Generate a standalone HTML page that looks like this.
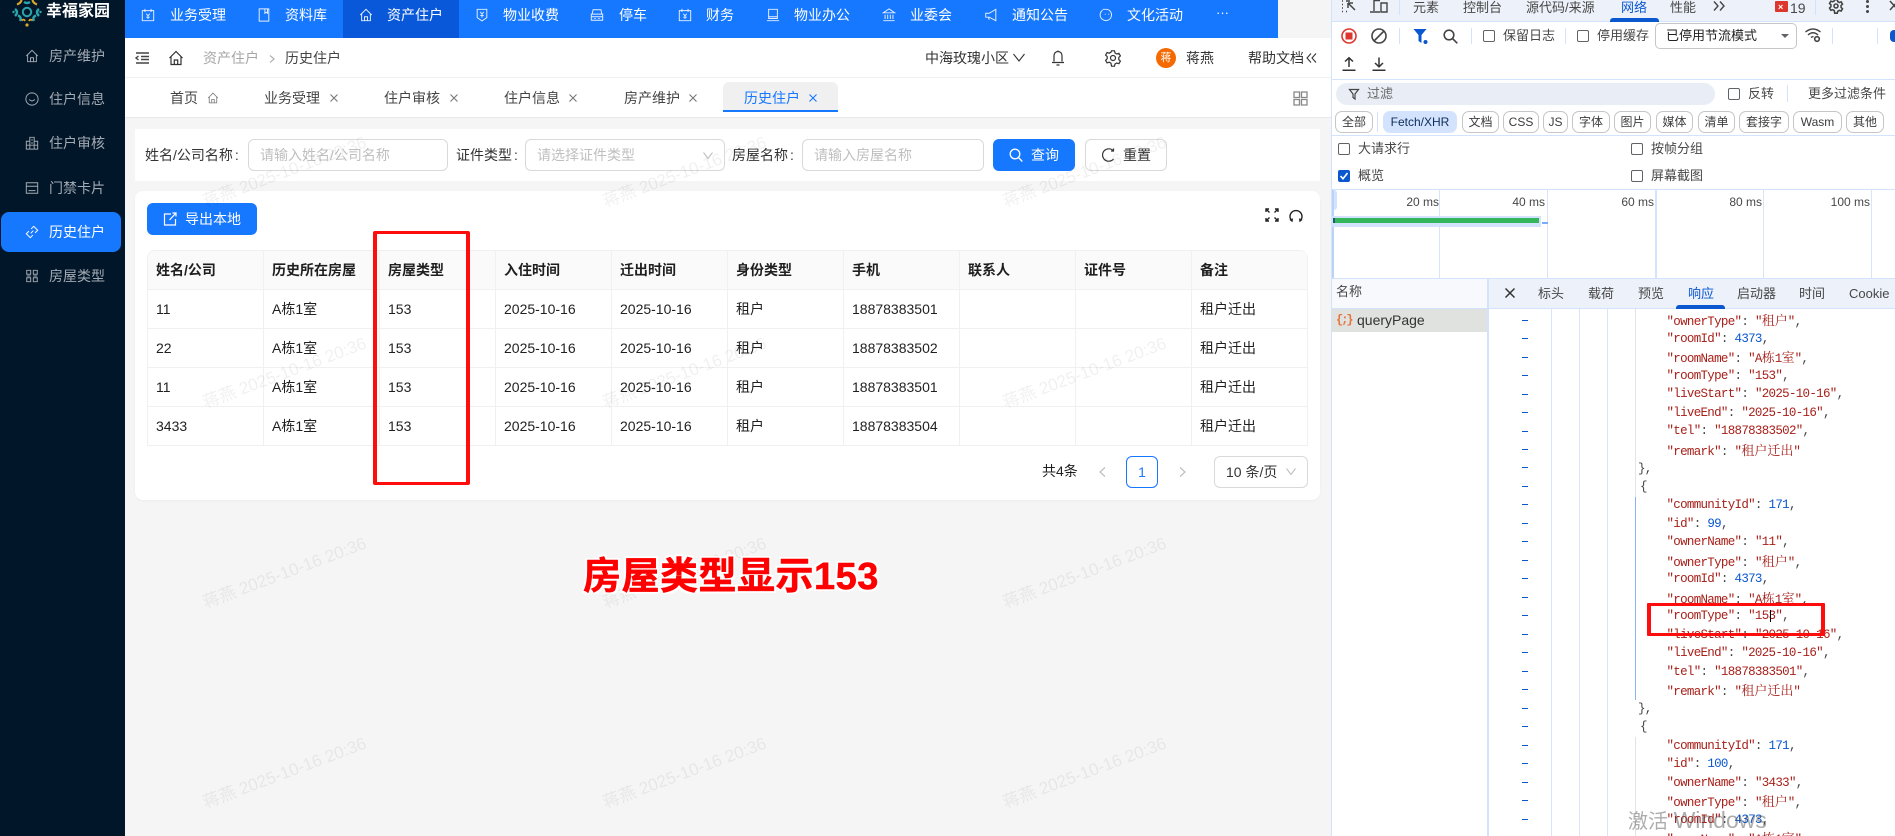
<!DOCTYPE html>
<html lang="zh-CN">
<head>
<meta charset="utf-8">
<title>历史住户</title>
<style>
*{box-sizing:border-box;margin:0;padding:0}
html,body{width:1895px;height:836px;overflow:hidden;background:#f5f5f5;font-family:"Liberation Sans","Noto Sans CJK SC",sans-serif;font-size:14px;color:rgba(0,0,0,.88)}
#r{position:absolute;left:0;top:0;width:1895px;height:836px;overflow:hidden}
.a{position:absolute}
.t{position:absolute;white-space:nowrap;line-height:20px;height:20px}
svg{position:absolute;fill:none;stroke:currentColor;stroke-width:1.1;overflow:visible}
.s{color:#a3abb4}
.n{color:#fff}
.ic{color:#e6f0ff}
.inp{position:absolute;top:139px;height:32px;background:transparent;border:1px solid #d9d9d9;border-radius:6px}
.ph{color:#bfbfbf}
.tabx{color:#777}
.co{margin-left:2px}
table{border-collapse:separate;border-spacing:0;table-layout:fixed;width:1160px}
td,th{height:39px;border-right:1px solid #f0f0f0;border-bottom:1px solid #f0f0f0;padding:0 8px;text-align:left;font-size:14px;white-space:nowrap;overflow:hidden}
th{background:#fafafa;font-weight:700}
.wm{position:absolute;white-space:nowrap;font-size:17px;line-height:24px;height:24px;color:rgba(0,0,0,.06);transform-origin:0 100%;transform:rotate(-20.5deg)}
.d{color:#474747;font-size:13px}
.chip{position:absolute;top:111px;height:22px;border:1px solid #c4c7c5;border-radius:7px;display:flex;align-items:center;justify-content:center;font-size:12px;color:#3c3c3c;line-height:1}
.cb{position:absolute;width:12px;height:12px;border:1px solid #5f6368;border-radius:2px;background:#fff}
.sep{position:absolute;width:1px;background:#d3e3fd}
.g{position:absolute;width:1px;background:#d9e4f7}
.dash{position:absolute;left:1522px;width:6px;height:1px;background:#0b57d0}
.j{position:absolute;left:1666.5px;white-space:pre;font-family:"Liberation Mono",monospace;font-size:12.5px;letter-spacing:-.7px;line-height:18px;height:18px;color:#a8201a}
.j i{font-style:normal;font-family:"Noto Serif CJK SC",serif;font-size:13px;letter-spacing:0}
.j b{font-weight:400;color:#0b57d0}
.j u{text-decoration:none;color:#444}
.ms{position:absolute;top:192px;font-size:12px;color:#474747;line-height:20px;text-align:right;width:60px}
</style>
</head>
<body>
<div id="r">

<!-- sidebar -->
<div class="a" style="left:0;top:0;width:125px;height:836px;background:#021629"></div>
<svg style="left:12px;top:0" width="30" height="28" viewBox="0 0 30 28">
<circle cx="15" cy="12" r="4.2" stroke="#2aa5ad" stroke-width="2"/>
<path d="M5 4.5Q9 3 9.5 0M25 4.5Q21 3 20.5 0" stroke="#d9a62e" stroke-width="2.2"/>
<path d="M3 9Q7 12 3 16M27 9Q23 12 27 16M8 21Q10 17 6 15.5M22 21Q20 17 24 15.5M12 2Q15 4 18 2" stroke="#2aa5ad" stroke-width="2.4"/>
<path d="M9.5 20.5Q12 18.5 13 21M20.5 20.5Q18 18.5 17 21" stroke="#d9a62e" stroke-width="1.8"/>
<circle cx="15" cy="25" r="1.6" fill="#d9a62e" stroke="none"/><circle cx="1.5" cy="12" r="1.2" fill="#2aa5ad" stroke="none"/><circle cx="28.5" cy="12" r="1.2" fill="#2aa5ad" stroke="none"/>
</svg>
<div class="t" style="left:46px;top:2px;color:#fff;font-weight:700;font-size:16px">幸福家园</div>

<div class="a" style="left:1px;top:212px;width:120px;height:40px;background:#1677ff;border-radius:8px"></div>

<svg class="s" style="left:25px;top:49px" width="14" height="14" viewBox="0 0 16 16"><path d="M1.500 8 8 1.500 14.500 8M3 6.500V14.500h10V6.500M6.300 14.500V10h3.400v4.500"/></svg>
<div class="t s" style="left:49px;top:46px">房产维护</div>
<svg class="s" style="left:25px;top:92px" width="14" height="14" viewBox="0 0 16 16"><circle cx="8" cy="8" r="7"/><path d="M4.800 8.500Q8 12 11.200 8.500"/></svg>
<div class="t s" style="left:49px;top:89px">住户信息</div>
<svg class="s" style="left:25px;top:136px" width="14" height="14" viewBox="0 0 16 16"><path d="M1.500 15V6h4V1.500h5V6h4v9zM5.500 6v9M10.500 6v9M1.500 10.500h13M7 4.500h2M7 8h2"/></svg>
<div class="t s" style="left:49px;top:133px">住户审核</div>
<svg class="s" style="left:25px;top:181px" width="14" height="14" viewBox="0 0 16 16"><path d="M1.500 2h13v12h-13zM1.500 6h13M4 11h8"/></svg>
<div class="t s" style="left:49px;top:178px">门禁卡片</div>
<svg class="n" style="left:25px;top:225px" width="14" height="14" viewBox="0 0 16 16"><path d="M6.500 9.500 9.500 6.500M7 4.500 10 1.500l4.500 4.500-3 3M9 11.500 6 14.500 1.500 10l3-3"/></svg>
<div class="t n" style="left:49px;top:222px">历史住户</div>
<svg class="s" style="left:25px;top:269px" width="14" height="14" viewBox="0 0 16 16"><path d="M2 1.500h4.500V6H2zM9.500 1.500H14V6H9.500zM2 10h4.500v4.500H2zM9.500 10H14v4.500H9.500zM2 8h4.500M9.500 8H14"/></svg>
<div class="t s" style="left:49px;top:266px">房屋类型</div>

<!-- top nav -->
<div class="a" style="left:125px;top:0;width:1153px;height:38px;background:#1677ff"></div>
<div class="a" style="left:343px;top:0;width:116px;height:38px;background:#0958d9"></div>
<svg class="ic" style="left:141px;top:8px" width="14" height="14" viewBox="0 0 16 16"><path d="M1.500 3h13v11.500h-13zM4.500 1v3.500M11.500 1v3.500M6 6.500l2 2.500 2-2.500M8 9v3.500M6 10.500h4"/></svg>
<div class="t n" style="left:170px;top:5px">业务受理</div>
<svg class="ic" style="left:257px;top:8px" width="14" height="14" viewBox="0 0 16 16"><path d="M2.500 1h11v14h-11zM9 1v5l1.500-1.200L12 6V1"/></svg>
<div class="t n" style="left:285px;top:5px">资料库</div>
<svg class="ic" style="left:359px;top:8px" width="14" height="14" viewBox="0 0 16 16"><path d="M1.500 8 8 1.500 14.500 8M3 6.500V14.500h10V6.500M6.300 14.500V10h3.400v4.500"/></svg>
<div class="t n" style="left:387px;top:5px">资产住户</div>
<svg class="ic" style="left:475px;top:8px" width="14" height="14" viewBox="0 0 16 16"><path d="M2.500 1.500h11v9.500L8 14.800 2.500 11zM6 4.500l2 2.500 2-2.500M8 7v4M6 8.500h4"/></svg>
<div class="t n" style="left:503px;top:5px">物业收费</div>
<svg class="ic" style="left:590px;top:8px" width="14" height="14" viewBox="0 0 16 16"><path d="M2.500 7l1-5h9l1 5M1.500 7h13v7h-13zM1.500 10h13M5 12h1.500M9.500 12H11"/></svg>
<div class="t n" style="left:619px;top:5px">停车</div>
<svg class="ic" style="left:678px;top:8px" width="14" height="14" viewBox="0 0 16 16"><path d="M1.500 3h13v11.500h-13zM4.500 1v3.500M11.500 1v3.500M6 6.500l2 2.500 2-2.500M8 9v3.500M6 10.500h4"/></svg>
<div class="t n" style="left:706px;top:5px">财务</div>
<svg class="ic" style="left:766px;top:8px" width="14" height="14" viewBox="0 0 16 16"><path d="M3 1.500h10V12H3zM1 14.500h14M3 10h10"/></svg>
<div class="t n" style="left:794px;top:5px">物业办公</div>
<svg class="ic" style="left:882px;top:8px" width="14" height="14" viewBox="0 0 16 16"><path d="M8 1 1.500 5.500h13zM3.500 7.500v5M6.500 7.500v5M9.500 7.500v5M12.500 7.500v5M1.500 14.500h13"/></svg>
<div class="t n" style="left:910px;top:5px">业委会</div>
<svg class="ic" style="left:984px;top:8px" width="14" height="14" viewBox="0 0 16 16"><path d="M13.500 1.500v13L6 10.500H2V6h4zM5 10.500l1 3"/></svg>
<div class="t n" style="left:1012px;top:5px">通知公告</div>
<svg class="ic" style="left:1100px;top:8px" width="14" height="14" viewBox="0 0 16 16"><path d="M3 2.500a6.500 6.500 0 1 0 5-1L3 1.500M6 6.500v1M10 6.500v1"/></svg>
<div class="t n" style="left:1127px;top:5px">文化活动</div>
<div class="t n" style="left:1216px;top:3px;font-size:13px">···</div>

<!-- white header rows -->
<div class="a" style="left:125px;top:38px;width:1206px;height:80px;background:#fff"></div>
<div class="a" style="left:125px;top:77px;width:1206px;height:1px;background:#f0f0f0"></div>
<div class="a" style="left:125px;top:117px;width:1206px;height:1px;background:#e8e8e8"></div>

<svg style="left:135px;top:51px;color:#444;stroke-width:1.4" width="14" height="14" viewBox="0 0 14 14"><path d="M1 2h13M6 5.500h8M6 8.500h8M1 12h13M3.500 5 1 7l2.500 2"/></svg>
<svg style="left:168px;top:50px;color:#333;stroke-width:1.200" width="16" height="16" viewBox="0 0 16 16"><path d="M1.500 8 8 1.500 14.500 8M3 6.500V14.500h10V6.500M6.300 14.500V10h3.400v4.500"/></svg>
<div class="t" style="left:203px;top:48px;color:#a6a6a6">资产住户</div>
<svg style="left:269px;top:55px;color:#a6a6a6" width="6" height="8" viewBox="0 0 6 8"><path d="M1 .5 5 4 1 7.500"/></svg>
<div class="t" style="left:285px;top:48px;color:#444">历史住户</div>

<div class="t" style="left:925px;top:48px;color:#333">中海玫瑰小区</div>
<svg style="left:1013px;top:53px;color:#333" width="12" height="9" viewBox="0 0 12 9"><path d="M.5 1 6 8l5.500-7"/></svg>
<svg style="left:1051px;top:50px;color:#333;stroke-width:1.2" width="14" height="16" viewBox="0 0 14 16"><path d="M7 .5v1.500M3 11.500V5.500a4 4 0 0 1 8 0v6M1 12.500h12M5.500 15h3"/></svg>
<svg style="left:1105px;top:50px;color:#333;stroke-width:1.200" width="16" height="16" viewBox="0 0 16 16"><path d="M6.500.8h3l.5 2.200 1.800 1 2.100-.7 1.500 2.600-1.600 1.500v2.200l1.600 1.500-1.500 2.600-2.100-.7-1.800 1-.5 2.200h-3L6 13.200l-1.800-1-2.100.7L.6 10.300l1.600-1.500V6.600L.6 5.100l1.500-2.600 2.100.7L6 2.200z"/><circle cx="8" cy="8" r="2.500"/></svg>
<div class="a" style="left:1156px;top:48px;width:20px;height:20px;border-radius:50%;background:#f56a00;color:#fff;font-size:11px;line-height:20px;text-align:center">蒋</div>
<div class="t" style="left:1186px;top:48px;color:#333">蒋燕</div>
<div class="t" style="left:1248px;top:48px;color:#333">帮助文档</div>
<svg style="left:1306px;top:53px;color:#333" width="11" height="10" viewBox="0 0 11 10"><path d="M5 .5 1 5l4 4.500M10 .5 6 5l4 4.500"/></svg>

<!-- tabs -->
<div class="t" style="left:170px;top:88px;color:#444">首页</div>
<svg style="left:207px;top:92px;color:#777" width="12" height="12" viewBox="0 0 16 16"><path d="M1.500 8 8 1.500 14.500 8M3 6.500V14.500h10V6.500M6.300 14.500V10h3.400v4.500"/></svg>
<div class="t" style="left:264px;top:88px;color:#444">业务受理</div>
<svg class="tabx" style="left:330px;top:94px" width="8" height="8" viewBox="0 0 8 8"><path d="M.5.500l7 7M7.500.500l-7 7"/></svg>
<div class="t" style="left:384px;top:88px;color:#444">住户审核</div>
<svg class="tabx" style="left:450px;top:94px" width="8" height="8" viewBox="0 0 8 8"><path d="M.5.500l7 7M7.500.500l-7 7"/></svg>
<div class="t" style="left:504px;top:88px;color:#444">住户信息</div>
<svg class="tabx" style="left:569px;top:94px" width="8" height="8" viewBox="0 0 8 8"><path d="M.5.500l7 7M7.500.500l-7 7"/></svg>
<div class="t" style="left:624px;top:88px;color:#444">房产维护</div>
<svg class="tabx" style="left:689px;top:94px" width="8" height="8" viewBox="0 0 8 8"><path d="M.5.500l7 7M7.500.500l-7 7"/></svg>
<div class="a" style="left:723px;top:82px;width:115px;height:30px;background:#f0f0f0;border-radius:6px 6px 0 0;border-bottom:2px solid #1677ff"></div>
<div class="t" style="left:744px;top:88px;color:#1677ff">历史住户</div>
<svg style="left:809px;top:94px;color:#1677ff" width="8" height="8" viewBox="0 0 8 8"><path d="M.5.500l7 7M7.500.500l-7 7"/></svg>
<svg style="left:1293px;top:91px;color:#888;stroke-width:1.300" width="15" height="15" viewBox="0 0 15 15"><path d="M1 1h5.500v5.500H1zM8.500 1H14v5.500H8.500zM1 8.500h5.500V14H1zM8.500 8.500H14V14H8.500z"/></svg>

<!-- search panel -->
<div class="a" style="left:135px;top:129px;width:1185px;height:52px;background:#fff"></div>
<div class="t" style="left:145px;top:145px;color:#333">姓名/公司名称<span class="co">:</span></div>
<div class="inp" style="left:248px;width:200px"></div>
<div class="t ph" style="left:260px;top:145px">请输入姓名/公司名称</div>
<div class="t" style="left:456px;top:145px;color:#333">证件类型<span class="co">:</span></div>
<div class="inp" style="left:525px;width:200px"></div>
<div class="t ph" style="left:537px;top:145px">请选择证件类型</div>
<svg style="left:703px;top:152px;color:#bfbfbf" width="10" height="7" viewBox="0 0 10 7"><path d="M.5.500 5 6.500 9.500.500"/></svg>
<div class="t" style="left:732px;top:145px;color:#333">房屋名称<span class="co">:</span></div>
<div class="inp" style="left:802px;width:182px"></div>
<div class="t ph" style="left:814px;top:145px">请输入房屋名称</div>
<div class="a" style="left:993px;top:139px;width:82px;height:32px;background:#1677ff;border-radius:6px"></div>
<svg class="n" style="left:1009px;top:148px;stroke-width:1.300" width="14" height="14" viewBox="0 0 14 14"><circle cx="6" cy="6" r="4.800"/><path d="M9.500 9.500l3.800 4"/></svg>
<div class="t n" style="left:1031px;top:145px">查询</div>
<div class="a" style="left:1085px;top:139px;width:82px;height:32px;background:#fff;border:1px solid #d9d9d9;border-radius:6px"></div>
<svg style="left:1101px;top:148px;color:#333;stroke-width:1.200" width="14" height="14" viewBox="0 0 14 14"><path d="M12.500 3A6.200 6.200 0 1 0 12.500 11"/><path d="M12.500.5V3H10"/></svg>
<div class="t" style="left:1123px;top:145px;color:#333">重置</div>

<!-- card -->
<div class="a" style="left:135px;top:191px;width:1185px;height:309px;background:#fff;border-radius:8px;box-shadow:0 1px 2px rgba(0,0,0,.04)"></div>
<div class="a" style="left:147px;top:203px;width:110px;height:32px;background:#1677ff;border-radius:6px"></div>
<svg class="n" style="left:163px;top:212px;stroke-width:1.200" width="14" height="14" viewBox="0 0 14 14"><path d="M8 2H1.500v11h11V7M6.500 8 13 1M9.500 1H13v3.500"/></svg>
<div class="t n" style="left:185px;top:209px">导出本地</div>
<svg style="left:1265px;top:208px;color:#222;stroke-width:1.400" width="14" height="14" viewBox="0 0 14 14"><path d="M1 1l3.500 3.500M1 4V1h3M13 1 9.500 4.500M13 4V1h-3M1 13l3.500-3.500M1 10v3h3M13 13 9.500 9.500M13 10v3h-3"/></svg>
<svg style="left:1289px;top:208px;color:#222;stroke-width:1.400" width="14" height="14" viewBox="0 0 14 14"><path d="M3 13A6 6 0 1 1 11 13M1 11.500l2 1.500 .3-2.500M13 11.500l-2 1.500-.3-2.500"/></svg>

<div class="a" style="left:147px;top:250px;width:1161px;border-top:1px solid #f0f0f0;border-left:1px solid #f0f0f0;border-radius:8px 8px 0 0;overflow:hidden">
<table>
<tr><th>姓名/公司</th><th>历史所在房屋</th><th>房屋类型</th><th>入住时间</th><th>迁出时间</th><th>身份类型</th><th>手机</th><th>联系人</th><th>证件号</th><th>备注</th></tr>
<tr><td>11</td><td>A栋1室</td><td>153</td><td>2025-10-16</td><td>2025-10-16</td><td>租户</td><td>18878383501</td><td></td><td></td><td>租户迁出</td></tr>
<tr><td>22</td><td>A栋1室</td><td>153</td><td>2025-10-16</td><td>2025-10-16</td><td>租户</td><td>18878383502</td><td></td><td></td><td>租户迁出</td></tr>
<tr><td>11</td><td>A栋1室</td><td>153</td><td>2025-10-16</td><td>2025-10-16</td><td>租户</td><td>18878383501</td><td></td><td></td><td>租户迁出</td></tr>
<tr><td>3433</td><td>A栋1室</td><td>153</td><td>2025-10-16</td><td>2025-10-16</td><td>租户</td><td>18878383504</td><td></td><td></td><td>租户迁出</td></tr>
</table>
</div>

<!-- pagination -->
<div class="t" style="left:1042px;top:461px">共4条</div>
<svg style="left:1099px;top:467px;color:#bfbfbf;stroke-width:1.200" width="7" height="10" viewBox="0 0 7 10"><path d="M6 .5 1 5l5 4.500"/></svg>
<div class="a" style="left:1126px;top:456px;width:32px;height:32px;border:1px solid #1677ff;border-radius:6px;color:#1677ff;text-align:center;line-height:30px">1</div>
<svg style="left:1179px;top:467px;color:#bfbfbf;stroke-width:1.200" width="7" height="10" viewBox="0 0 7 10"><path d="M1 .5 6 5l-5 4.500"/></svg>
<div class="a" style="left:1214px;top:456px;width:94px;height:32px;border:1px solid #d9d9d9;border-radius:6px"></div>
<div class="t" style="left:1226px;top:462px;color:#333">10 条/页</div>
<svg style="left:1286px;top:468px;color:#bfbfbf" width="10" height="7" viewBox="0 0 10 7"><path d="M.5.500 5 6.500 9.500.500"/></svg>

<!-- watermarks -->
<div class="wm" style="left:208px;top:190px">蒋燕 2025-10-16 20:36</div>
<div class="wm" style="left:608px;top:190px">蒋燕 2025-10-16 20:36</div>
<div class="wm" style="left:1008px;top:190px">蒋燕 2025-10-16 20:36</div>
<div class="wm" style="left:208px;top:391px">蒋燕 2025-10-16 20:36</div>
<div class="wm" style="left:608px;top:391px">蒋燕 2025-10-16 20:36</div>
<div class="wm" style="left:1008px;top:391px">蒋燕 2025-10-16 20:36</div>
<div class="wm" style="left:208px;top:591px">蒋燕 2025-10-16 20:36</div>
<div class="wm" style="left:608px;top:591px">蒋燕 2025-10-16 20:36</div>
<div class="wm" style="left:1008px;top:591px">蒋燕 2025-10-16 20:36</div>
<div class="wm" style="left:208px;top:791px">蒋燕 2025-10-16 20:36</div>
<div class="wm" style="left:608px;top:791px">蒋燕 2025-10-16 20:36</div>
<div class="wm" style="left:1008px;top:791px">蒋燕 2025-10-16 20:36</div>

<!-- annotations -->
<div class="a" style="left:373px;top:231px;width:97px;height:254px;border:4px solid #ff0d0d;border-width:3.500px 4px;border-radius:2px"></div>
<div class="t" style="left:583px;top:554px;height:46px;line-height:46px;font-size:38px;font-weight:700;color:#ff0000;letter-spacing:.5px;-webkit-text-stroke:.5px #f00;text-shadow:2px 0 #fff,-2px 0 #fff,0 2px #fff,0 -2px #fff,2px 2px #fff,-2px 2px #fff,2px -2px #fff,-2px -2px #fff">房屋类型显示153</div>

<!-- devtools -->
<div class="a" style="left:1331px;top:0;width:564px;height:836px;background:#fff;border-left:1.500px solid #d3e3fd"></div>
<div class="a" style="left:1332px;top:0;width:563px;height:22px;background:#edf2fa;border-bottom:1px solid #d3e3fd"></div>
<svg style="left:1341px;top:0;color:#444;stroke-width:1.500" width="16" height="14" viewBox="0 0 16 14"><path d="M1 1h1M1 4.500h1M1 8h1M1 11.500h1M5 11.500h1M5 1h4M7 3l7 7M7 3v5M7 3h5"/></svg>
<svg style="left:1370px;top:0;color:#444;stroke-width:1.400" width="18" height="13" viewBox="0 0 18 13"><path d="M4 11V.5h6M0 12h10M11 3h6v9h-6z"/></svg>
<div class="sep" style="left:1399px;top:0;height:15px"></div>
<div class="t d" style="left:1413px;top:-2px">元素</div>
<div class="t d" style="left:1463px;top:-2px">控制台</div>
<div class="t d" style="left:1526px;top:-2px">源代码/来源</div>
<div class="t d" style="left:1621px;top:-2px;color:#0b57d0">网络</div>
<div class="a" style="left:1610px;top:18px;width:49px;height:4px;background:#0b57d0;border-radius:3px 3px 0 0"></div>
<div class="t d" style="left:1670px;top:-2px">性能</div>
<svg style="left:1713px;top:1px;color:#444;stroke-width:1.400" width="12" height="10" viewBox="0 0 12 10"><path d="M1 .5 5 5 1 9.500M7 .5 11 5 7 9.500"/></svg>
<div class="a" style="left:1775px;top:1px;width:13px;height:11px;background:#dc362e;border-radius:1px"></div>
<div class="t" style="left:1778px;top:-3px;color:#fff;font-size:9px;font-weight:700">×</div>
<div class="t d" style="left:1790px;top:-2px;font-size:14px">19</div>
<div class="sep" style="left:1815px;top:0;height:15px"></div>
<svg style="left:1829px;top:-1px;color:#444;stroke-width:1.800" width="14" height="14" viewBox="0 0 16 16"><path d="M6.500.8h3l.5 2.200 1.800 1 2.100-.7 1.500 2.600-1.600 1.500v2.200l1.600 1.500-1.500 2.600-2.100-.7-1.800 1-.5 2.200h-3L6 13.200l-1.800-1-2.100.7L.6 10.300l1.600-1.500V6.600L.6 5.100l1.500-2.600 2.100.7L6 2.200z"/><circle cx="8" cy="8" r="2.300"/></svg>
<div class="a" style="left:1866px;top:0;width:3px;height:3px;border-radius:50%;background:#444"></div>
<div class="a" style="left:1866px;top:5px;width:3px;height:3px;border-radius:50%;background:#444"></div>
<div class="a" style="left:1866px;top:10px;width:3px;height:3px;border-radius:50%;background:#444"></div>
<svg style="left:1890px;top:1px;color:#444;stroke-width:1.500" width="8" height="10" viewBox="0 0 8 10"><path d="M0 0l8 9M8 0 0 9"/></svg>

<!-- row 2 -->
<svg style="left:1341px;top:28px;stroke:none" width="16" height="16" viewBox="0 0 16 16"><circle cx="8" cy="8" r="7" fill="none" stroke="#dc362e" stroke-width="1.600"/><rect x="4.500" y="4.500" width="7" height="7" fill="#dc362e"/></svg>
<svg style="left:1371px;top:28px;color:#444;stroke-width:1.600" width="16" height="16" viewBox="0 0 16 16"><circle cx="8" cy="8" r="7"/><path d="M3 13 13 3"/></svg>
<div class="sep" style="left:1399px;top:28px;height:16px"></div>
<svg style="left:1413px;top:29px;stroke:none" width="18" height="16" viewBox="0 0 18 16"><path d="M.5 0h13l-5 6v8l-3-2V6z" fill="#0b57d0"/><circle cx="12.500" cy="13" r="2" fill="#0b57d0"/></svg>
<svg style="left:1443px;top:29px;color:#444;stroke-width:1.600" width="15" height="15" viewBox="0 0 15 15"><circle cx="6" cy="6" r="4.800"/><path d="M9.500 9.500l4.800 4.800"/></svg>
<div class="sep" style="left:1471px;top:28px;height:16px"></div>
<div class="cb" style="left:1483px;top:30px"></div>
<div class="t d" style="left:1503px;top:26px">保留日志</div>
<div class="sep" style="left:1565px;top:28px;height:16px"></div>
<div class="cb" style="left:1577px;top:30px"></div>
<div class="t d" style="left:1597px;top:26px">停用缓存</div>
<div class="a" style="left:1655px;top:23px;width:142px;height:26px;border:1px solid #c4c7c5;border-radius:5px"></div>
<div class="t d" style="left:1666px;top:26px;color:#222">已停用节流模式</div>
<div class="a" style="left:1781px;top:34px;border-left:4px solid transparent;border-right:4px solid transparent;border-top:4px solid #5f6368"></div>
<svg style="left:1805px;top:27px;color:#444;stroke-width:1.400" width="17" height="16" viewBox="0 0 17 16"><path d="M.5 5Q8-1 15.500 5M3 8Q8 3.500 13 8M6 10.500Q7.500 9.500 8.500 9.800"/><circle cx="12" cy="12" r="2.300" stroke-width="1.600"/></svg>
<div class="sep" style="left:1832px;top:28px;height:16px"></div>
<div class="sep" style="left:1877px;top:28px;height:16px"></div>
<div class="a" style="left:1890px;top:30px;width:10px;height:12px;border-radius:4px;background:#0b57d0"></div>
<svg style="left:1342px;top:57px;color:#333;stroke-width:1.500" width="14" height="14" viewBox="0 0 14 14"><path d="M7 10V1M3 4.500 7 .8l4 3.700M.5 13.200h13"/></svg>
<svg style="left:1372px;top:57px;color:#333;stroke-width:1.500" width="14" height="14" viewBox="0 0 14 14"><path d="M7 .5V9.500M3 6l4 3.800L11 6M.5 13.200h13"/></svg>
<div class="a" style="left:1332px;top:79px;width:563px;height:1px;background:#d3e3fd"></div>

<!-- filter row -->
<div class="a" style="left:1336px;top:83px;width:379px;height:22px;border-radius:11px;background:#e9eef6"></div>
<svg style="left:1349px;top:89px;color:#444;stroke-width:1.200" width="10" height="11" viewBox="0 0 10 11"><path d="M.5.500h9L6 5v5L4 8.500V5z"/></svg>
<div class="t d" style="left:1367px;top:84px;color:#666">过滤</div>
<div class="cb" style="left:1728px;top:88px"></div>
<div class="t d" style="left:1748px;top:84px">反转</div>
<div class="sep" style="left:1787px;top:85px;height:17px"></div>
<div class="t d" style="left:1808px;top:84px">更多过滤条件</div>

<!-- chips -->
<div class="chip" style="left:1335px;width:38px">全部</div>
<div class="sep" style="left:1377px;top:112px;height:20px"></div>
<div class="chip" style="left:1383px;width:74px;background:#d3e3fd;border-color:#d3e3fd;color:#0d2d5c">Fetch/XHR</div>
<div class="chip" style="left:1462px;width:37px">文档</div>
<div class="chip" style="left:1503px;width:36px">CSS</div>
<div class="chip" style="left:1543px;width:25px">JS</div>
<div class="chip" style="left:1572px;width:38px">字体</div>
<div class="chip" style="left:1614px;width:37px">图片</div>
<div class="chip" style="left:1656px;width:37px">媒体</div>
<div class="chip" style="left:1698px;width:37px">清单</div>
<div class="chip" style="left:1739px;width:50px">套接字</div>
<div class="chip" style="left:1793px;width:49px">Wasm</div>
<div class="chip" style="left:1846px;width:38px">其他</div>
<div class="a" style="left:1332px;top:135px;width:563px;height:1px;background:#d3e3fd"></div>

<!-- options -->
<div class="cb" style="left:1338px;top:143px"></div>
<div class="t d" style="left:1358px;top:139px">大请求行</div>
<div class="cb" style="left:1631px;top:143px"></div>
<div class="t d" style="left:1651px;top:139px">按帧分组</div>
<div class="cb" style="left:1338px;top:170px;background:#0b57d0;border-color:#0b57d0"></div>
<svg style="left:1340px;top:172px;color:#fff;stroke-width:1.600" width="8" height="8" viewBox="0 0 8 8"><path d="M.5 4 3 6.800 7.500 1"/></svg>
<div class="t d" style="left:1358px;top:166px">概览</div>
<div class="cb" style="left:1631px;top:170px"></div>
<div class="t d" style="left:1651px;top:166px">屏幕截图</div>
<div class="a" style="left:1332px;top:189px;width:563px;height:1px;background:#d3e3fd"></div>

<!-- overview -->
<div class="g" style="left:1439px;top:190px;height:88px"></div>
<div class="g" style="left:1547px;top:190px;height:88px"></div>
<div class="g" style="left:1655px;top:190px;height:88px;width:1.500px;background:#d3e3fd"></div>
<div class="g" style="left:1763px;top:190px;height:88px"></div>
<div class="g" style="left:1871px;top:190px;height:88px"></div>
<div class="ms" style="left:1379px">20 ms</div>
<div class="ms" style="left:1485px">40 ms</div>
<div class="ms" style="left:1594px">60 ms</div>
<div class="ms" style="left:1702px">80 ms</div>
<div class="ms" style="left:1810px">100 ms</div>
<div class="a" style="left:1332px;top:190px;width:5px;height:20px;background:#d3e3fd;border-radius:0 3px 3px 0"></div>
<div class="a" style="left:1332px;top:190px;width:2px;height:88px;background:#bcd3f8"></div>
<div class="a" style="left:1332px;top:216px;width:209px;height:11px;background:#d3e3fd"></div>
<div class="a" style="left:1333px;top:218px;width:206px;height:5px;background:#34b75c"></div>
<div class="a" style="left:1333px;top:218px;width:2px;height:5px;background:#1f5c70"></div>
<div class="a" style="left:1542px;top:222px;width:6px;height:1.500px;background:#7cacf8"></div>
<div class="a" style="left:1332px;top:278px;width:563px;height:1px;background:#d3e3fd"></div>

<!-- details header -->
<div class="a" style="left:1332px;top:279px;width:155px;height:29px;background:#f7f9fd"></div>
<div class="a" style="left:1487px;top:279px;width:408px;height:29px;background:#edf2fa"></div>
<div class="a" style="left:1332px;top:308px;width:563px;height:1px;background:#d3e3fd"></div>
<div class="t d" style="left:1336px;top:282px">名称</div>
<svg style="left:1505px;top:288px;color:#333;stroke-width:1.500" width="10" height="10" viewBox="0 0 10 10"><path d="M.5.500l9 9M9.500.500l-9 9"/></svg>
<div class="t d" style="left:1538px;top:284px">标头</div>
<div class="t d" style="left:1588px;top:284px">载荷</div>
<div class="t d" style="left:1638px;top:284px">预览</div>
<div class="t d" style="left:1688px;top:284px;color:#0b57d0">响应</div>
<div class="a" style="left:1676px;top:305px;width:49px;height:3.500px;background:#0b57d0;border-radius:3px 3px 0 0"></div>
<div class="t d" style="left:1737px;top:284px">启动器</div>
<div class="t d" style="left:1799px;top:284px">时间</div>
<div class="t d" style="left:1849px;top:284px">Cookie</div>

<!-- name list -->
<div class="a" style="left:1332px;top:309px;width:155px;height:23px;background:#e0e2df"></div>
<div class="t" style="left:1336px;top:310px;font-family:'Liberation Mono',monospace;font-size:12px;letter-spacing:-2px;font-weight:700;color:#e8703a">{;}</div>
<div class="t" style="left:1357px;top:310px;color:#333">queryPage</div>

<!-- response gutters -->
<div class="g" style="left:1487px;top:279px;height:557px;width:1.500px;background:#d3e3fd"></div>
<div class="g" style="left:1551px;top:309px;height:527px"></div>
<div class="g" style="left:1579px;top:309px;height:527px"></div>
<div class="g" style="left:1607px;top:309px;height:527px"></div>
<div class="g" style="left:1635px;top:309px;height:188px;background:#e3e3e3"></div>
<div class="g" style="left:1635px;top:497px;height:203px;background:#8ab4f8"></div>
<div class="g" style="left:1635px;top:737px;height:99px;background:#e3e3e3"></div>

<div class="dash" style="top:320px"></div><div class="dash" style="top:338px"></div><div class="dash" style="top:357px"></div><div class="dash" style="top:375px"></div><div class="dash" style="top:394px"></div><div class="dash" style="top:412px"></div><div class="dash" style="top:431px"></div><div class="dash" style="top:449px"></div><div class="dash" style="top:467px"></div><div class="dash" style="top:486px"></div><div class="dash" style="top:504px"></div><div class="dash" style="top:523px"></div><div class="dash" style="top:541px"></div><div class="dash" style="top:560px"></div><div class="dash" style="top:578px"></div><div class="dash" style="top:597px"></div><div class="dash" style="top:615px"></div><div class="dash" style="top:634px"></div><div class="dash" style="top:652px"></div><div class="dash" style="top:671px"></div><div class="dash" style="top:689px"></div><div class="dash" style="top:708px"></div><div class="dash" style="top:726px"></div><div class="dash" style="top:745px"></div><div class="dash" style="top:763px"></div><div class="dash" style="top:782px"></div><div class="dash" style="top:800px"></div><div class="dash" style="top:819px"></div>

<div class="j" style="top:311px">"ownerType"<u>: </u>"<i>租户</i>"<u>,</u></div>
<div class="j" style="top:330px">"roomId"<u>: </u><b>4373</b><u>,</u></div>
<div class="j" style="top:348px">"roomName"<u>: </u>"A<i>栋</i>1<i>室</i>"<u>,</u></div>
<div class="j" style="top:367px">"roomType"<u>: </u>"153"<u>,</u></div>
<div class="j" style="top:385px">"liveStart"<u>: </u>"2025-10-16"<u>,</u></div>
<div class="j" style="top:404px">"liveEnd"<u>: </u>"2025-10-16"<u>,</u></div>
<div class="j" style="top:422px">"tel"<u>: </u>"18878383502"<u>,</u></div>
<div class="j" style="top:441px">"remark"<u>: </u>"<i>租户迁出</i>"</div>
<div class="j" style="top:460px;left:1638px"><u>},</u></div>
<div class="j" style="top:478px;left:1640px"><u>{</u></div>
<div class="j" style="top:496px">"communityId"<u>: </u><b>171</b><u>,</u></div>
<div class="j" style="top:515px">"id"<u>: </u><b>99</b><u>,</u></div>
<div class="j" style="top:533px">"ownerName"<u>: </u>"11"<u>,</u></div>
<div class="j" style="top:552px">"ownerType"<u>: </u>"<i>租户</i>"<u>,</u></div>
<div class="j" style="top:570px">"roomId"<u>: </u><b>4373</b><u>,</u></div>
<div class="j" style="top:589px">"roomName"<u>: </u>"A<i>栋</i>1<i>室</i>"<u>,</u></div>
<div class="j" style="top:607px">"roomType"<u>: </u>"153"<u>,</u></div>
<div class="j" style="top:626px">"liveStart"<u>: </u>"2025-10-16"<u>,</u></div>
<div class="j" style="top:644px">"liveEnd"<u>: </u>"2025-10-16"<u>,</u></div>
<div class="j" style="top:663px">"tel"<u>: </u>"18878383501"<u>,</u></div>
<div class="j" style="top:681px">"remark"<u>: </u>"<i>租户迁出</i>"</div>
<div class="j" style="top:700px;left:1638px"><u>},</u></div>
<div class="j" style="top:718px;left:1640px"><u>{</u></div>
<div class="j" style="top:737px">"communityId"<u>: </u><b>171</b><u>,</u></div>
<div class="j" style="top:755px">"id"<u>: </u><b>100</b><u>,</u></div>
<div class="j" style="top:774px">"ownerName"<u>: </u>"3433"<u>,</u></div>
<div class="j" style="top:792px">"ownerType"<u>: </u>"<i>租户</i>"<u>,</u></div>
<div class="j" style="top:811px">"roomId"<u>: </u><b>4373</b><u>,</u></div>
<div class="j" style="top:829px">"roomName"<u>: </u>"A<i>栋</i>1<i>室</i>"<u>,</u></div>

<div class="a" style="left:1770px;top:610px;width:1px;height:12px;background:#000"></div>
<div class="a" style="left:1647px;top:603px;width:178px;height:33px;border:4px solid #ff0d0d;border-width:3.500px 4px;border-radius:1px"></div>

<!-- activate windows -->
<div class="t" style="left:1628px;top:806px;height:28px;line-height:28px;font-size:20px;color:rgba(70,70,70,.45)">激活 <span style="font-size:23px">Windows</span></div>

</div>
</body>
</html>
